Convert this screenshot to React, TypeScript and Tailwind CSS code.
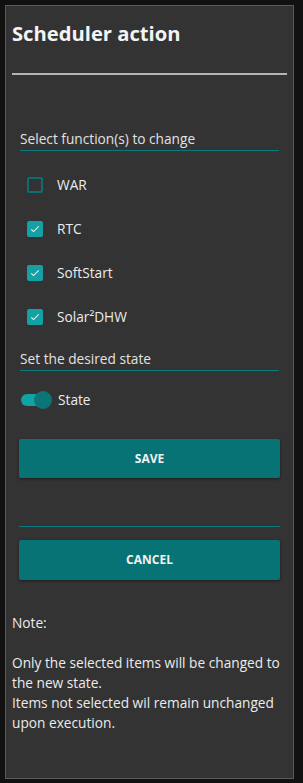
const font = { fontFamily: '"Open Sans", "Noto Sans", sans-serif' };

function Check({ checked }: { checked: boolean }) {
  if (!checked) {
    return <span className="h-4 w-4 shrink-0 rounded-[2px] border-2 border-[#0b6f71]" />;
  }
  return (
    <span className="flex h-4 w-4 shrink-0 items-center justify-center rounded-[2px] bg-[#12a2a6]">
      <svg viewBox="0 0 16 16" className="h-3 w-3" fill="none" stroke="#e6f4f4" strokeWidth="1.4">
        <path d="M3 8.5l3 3 7-7" />
      </svg>
    </span>
  );
}

function Heading({ text }: { text: string }) {
  return (
    <div className="mx-[14px] border-b border-[#0b7a7c] pb-[2px] text-[13.7px] leading-[18px] text-[#e2e2e2]">
      {text}
    </div>
  );
}

export default function App() {
  const items = [
    { label: 'WAR', checked: false },
    { label: 'RTC', checked: true },
    { label: 'SoftStart', checked: true },
    { label: 'Solar²DHW', checked: true },
  ];

  return (
    <div className="h-[783px] w-[303px] bg-[#111111] p-[5px]" style={font}>
      <div className="h-[774px] w-[289px] border border-[#5a5a5a] bg-[#333333]">
        <h1 className="ml-[6px] mt-[12px] text-[20.2px] font-bold leading-[30px] text-[#f4f4f4]">Scheduler action</h1>
        <div className="mx-[6px] mt-[25px] h-[2px] bg-[#b4b4b4]" />

        <div className="mt-[55px]">
          <Heading text="Select function(s) to change" />
        </div>

        <div className="mt-[26px] flex flex-col gap-[28px] pl-[21px]">
          {items.map((it) => (
            <div key={it.label} className="flex h-4 items-center gap-[14px] text-[13.7px] text-[#ececec]">
              <Check checked={it.checked} />
              <span>{it.label}</span>
            </div>
          ))}
        </div>

        <div className="mt-[25px]">
          <Heading text="Set the desired state" />
        </div>

        <div className="ml-[14px] mt-[20px] flex h-[18px] items-center gap-[6px]">
          <div className="relative h-[18px] w-[32px]">
            <div className="absolute left-[1px] top-[3px] h-[12px] w-[26px] rounded-full bg-[#11a2a5]" />
            <div className="absolute right-0 top-0 h-[18px] w-[18px] rounded-full bg-[#0b7577]" />
          </div>
          <span className="text-[13.7px] text-[#ececec]">State</span>
        </div>

        <div className="mx-[13px] mt-[30px] flex flex-col">
          <button className="h-[39px] rounded-[2px] bg-[#087375] text-[12px] font-bold text-[#f2f2f2] shadow-[0_1px_3px_rgba(0,0,0,0.45)]">
            SAVE
          </button>
          <div className="mt-[48px] h-[1px] bg-[#0b7a7c]" />
          <button className="mt-[13px] h-[40px] rounded-[2px] bg-[#087375] text-[12px] font-bold text-[#f2f2f2] shadow-[0_1px_3px_rgba(0,0,0,0.45)]">
            CANCEL
          </button>
        </div>

        <div className="ml-[6px] mr-[4px] mt-[33px] text-[13.7px] leading-[20px] text-[#ececec]">
          <p>Note:</p>
          <p className="mt-[20px]">
            Only the selected items will be changed to the new state.
            <br />
            Items not selected wil remain unchanged upon execution.
          </p>
        </div>
      </div>
    </div>
  );
}
